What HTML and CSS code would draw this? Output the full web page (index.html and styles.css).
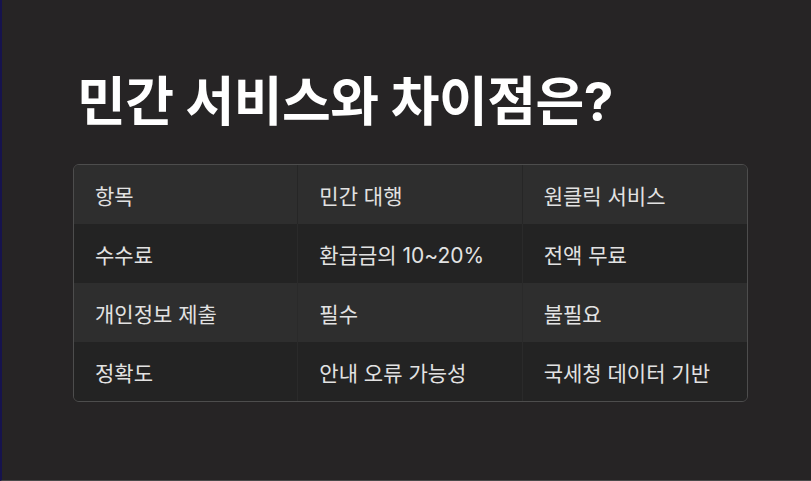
FILE: index.html
```html
<!DOCTYPE html>
<html lang="ko">
<head>
<meta charset="utf-8">
<link rel="stylesheet" href="styles.css">
</head>
<body>
<main class="page">
  <h1 class="title">민간 서비스와 차이점은?</h1>
  <table class="compare">
    <thead>
      <tr><th>항목</th><th>민간 대행</th><th>원클릭 서비스</th></tr>
    </thead>
    <tbody>
      <tr><td>수수료</td><td>환급금의 10~20%</td><td>전액 무료</td></tr>
      <tr><td>개인정보 제출</td><td>필수</td><td>불필요</td></tr>
      <tr><td>정확도</td><td>안내 오류 가능성</td><td>국세청 데이터 기반</td></tr>
    </tbody>
  </table>
</main>
</body>
</html>
```
FILE: styles.css
```css
* { box-sizing: border-box; }
html, body { margin: 0; padding: 0; }
body {
  width: 811px;
  height: 481px;
  background: #262425;
  border-left: 2px solid #16134d;
  border-bottom: 1px solid #4a4a4a;
  font-family: Inter, "Noto Sans CJK KR", sans-serif;
  overflow: hidden;
}
.page {
  padding: 70px 0 0 71px;
}
.title {
  margin: 0 0 30px 4px;
  font-size: 53px;
  line-height: 64px;
  font-weight: 700;
  color: #ffffff;
  letter-spacing: -0.5px;
}
.compare {
  width: 675px;
  border-collapse: separate;
  border-spacing: 0;
  border: 1px solid #4d4d4d;
  border-radius: 6px;
  overflow: hidden;
  table-layout: fixed;
}
.compare th, .compare td {
  height: 59px;
  padding: 0 21px;
  text-align: left;
  font-size: 21px;
  font-weight: 400;
  color: #e2e2e2;
  border-right: 1px solid #2a2a2a;
}
.compare th:last-child, .compare td:last-child { border-right: none; }
.compare thead tr { background: #2e2e2e; }
.compare tbody tr { background: #232323; }
.compare tbody tr:nth-child(2) { background: #2e2e2e; }
.compare thead th { border-right-color: #262626; }
```
